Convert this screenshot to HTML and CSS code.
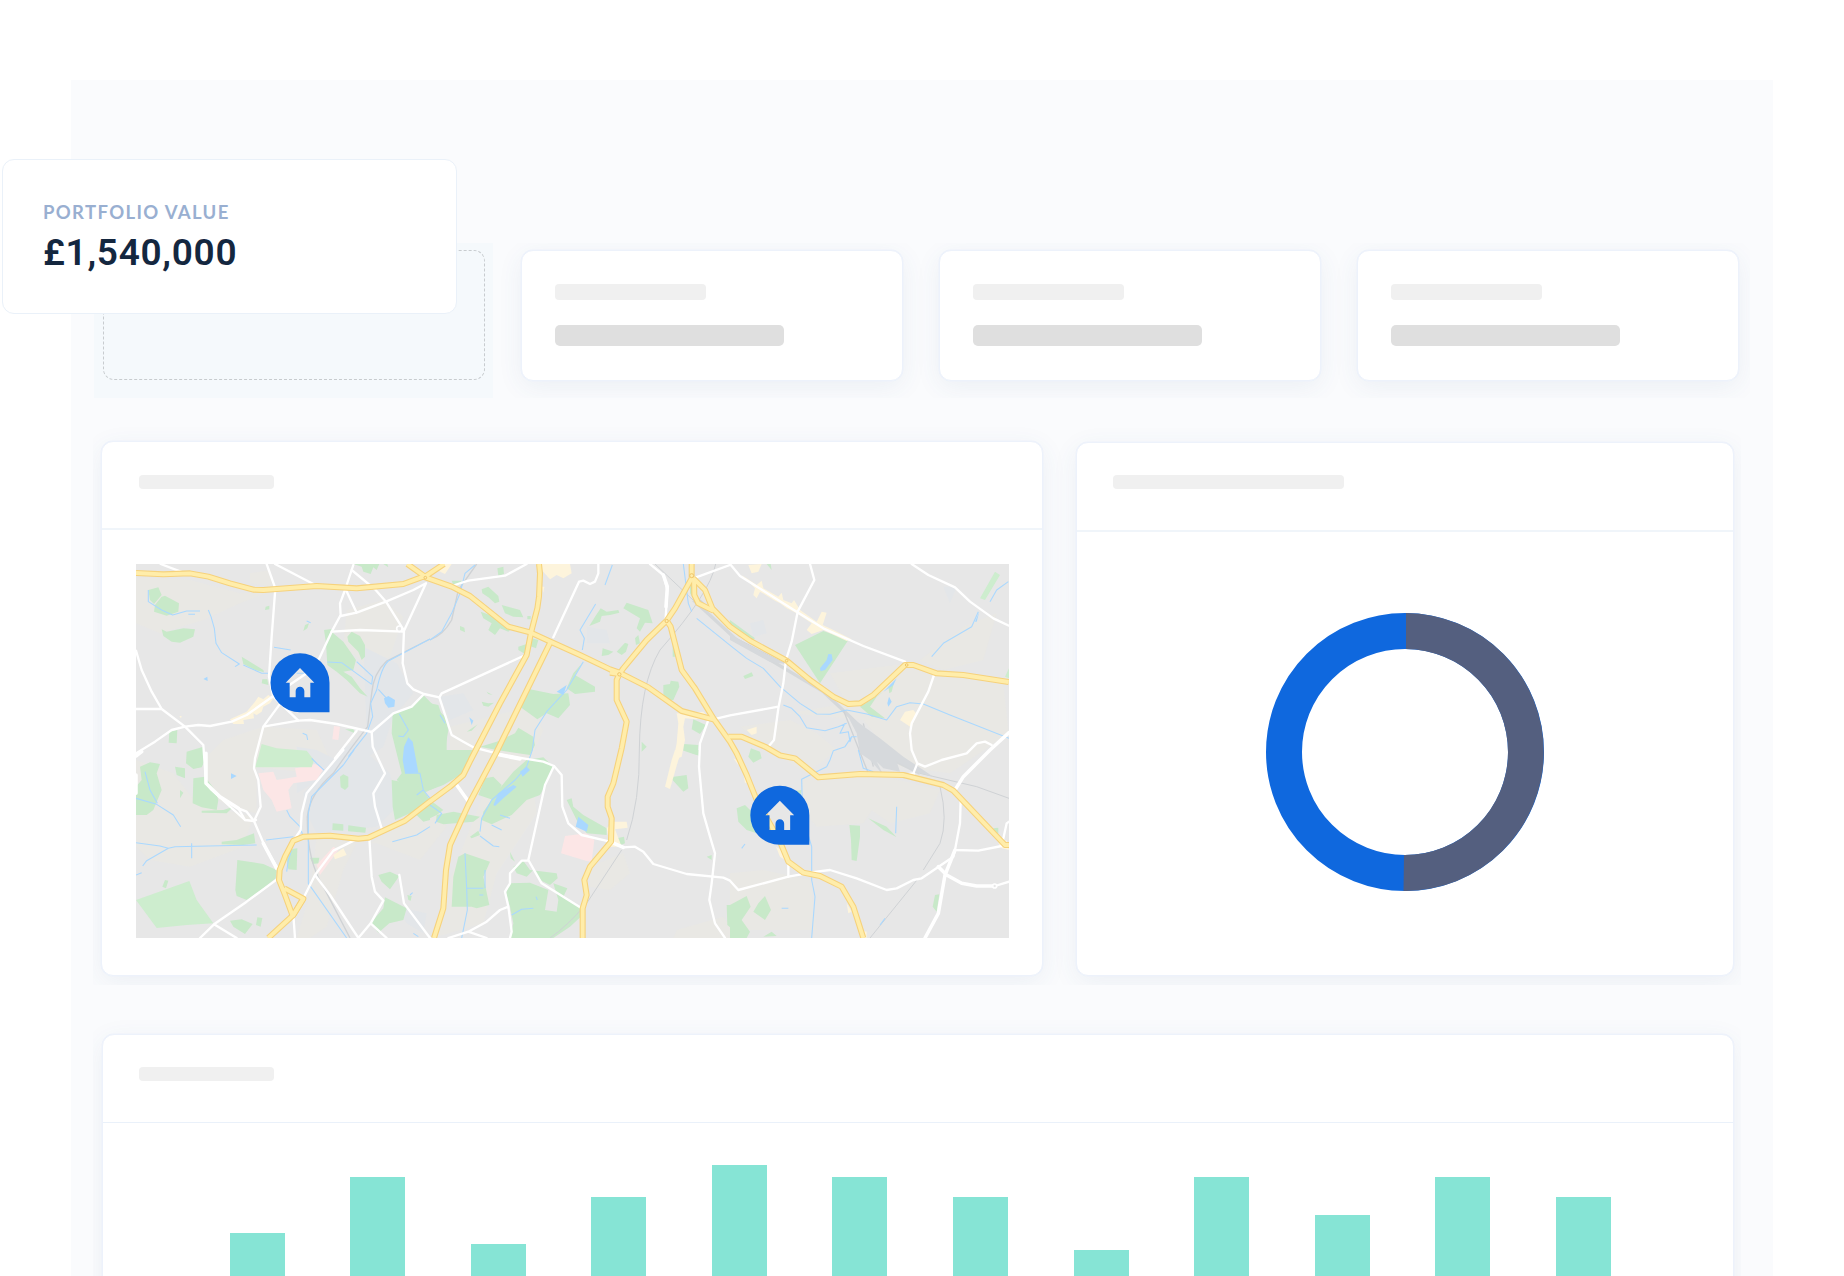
FILE: index.html
```html
<!DOCTYPE html>
<html lang="en">
<head>
<meta charset="utf-8">
<title>Portfolio dashboard</title>
<link rel="stylesheet" href="styles.css">
</head>
<body>
<main class="panel">
  <section class="stats">
    <div class="drop-zone"><div class="drop-target"></div></div>
    <div class="card stat"><span class="bone bone-label"></span><span class="bone bone-value"></span></div>
    <div class="card stat"><span class="bone bone-label"></span><span class="bone bone-value"></span></div>
    <div class="card stat"><span class="bone bone-label"></span><span class="bone bone-value"></span></div>
  </section>

  <section class="overview">
    <article class="card map-card">
      <header class="card-head"><span class="bone bone-title"></span></header>
      <svg class="map" viewBox="18 12 2619 1122" preserveAspectRatio="none">
        <defs>
          <g id="main-roads">
            <path d="M18 39L100 43L180 40L235 50L300 70L370 89L400 90L440 87L560 78L680 85L820 72L880 50L965 80L1020 108L1135 200L1203 218L1262 245L1350 285L1440 328L1468 338L1555 382L1655 453L1750 478"/>
            <path d="M832 12L885 50L942 12" />
            <path d="M1227 12L1230 40L1227 110L1222 145L1203 218L1190 285L1110 430L1022 600L1000 645L960 680L900 724L825 782L715 833L685 836L600 827L520 830L490 842L465 890L449 930L447 960L465 1005L487 1065L490 1065L520 1016L463 985"/>
            <path d="M520 1016L490 1065L415 1134"/>
            <path d="M1262 245L1100 575L1015 735L960 855L948 930L940 1045L912 1134"/>
            <path d="M1685 12V55L1635 145L1610 182L1550 240L1480 325L1468 342L1440 338"/>
            <path d="M1690 55L1725 90L1747 145L1800 200L1860 242L1970 302L2040 360L2110 410L2155 432L2190 430L2230 405L2325 315L2350 315L2420 340L2500 345L2636 366"/>
            <path d="M1692 60L1693 105L1705 130L1750 152"/>
            <path d="M1610 182L1622 200L1655 330L1695 385L1750 475L1800 545L1820 580L1850 645L1880 720L1950 845L1975 905L2020 938L2070 948L2135 980L2170 1040L2200 1134"/>
            <path d="M1795 530L1835 530L1905 560L1950 586L1995 595L2065 652L2190 642L2320 645L2440 675L2470 692L2625 855L2637 855"/>
            <path d="M1468 342L1460 360V420L1490 485L1475 565L1450 670L1433 710V740L1445 775L1443 845L1380 920L1363 960L1370 1005L1358 1045V1134"/>
          </g>
        </defs>
        <rect class="land" x="18" y="12" width="2619" height="1122"/>

        <g class="soil">
          <path d="M18 50L180 60L330 100L420 95L330 130L220 180L90 220L18 190z"/>
          <path d="M360 40L420 30L430 80L360 70zM650 150L760 120L820 170L780 290L720 320L640 260z"/>
          <path d="M230 590L280 540L400 500L560 510L600 600L540 640L380 620L380 760L300 740L230 700z"/>
          <path d="M18 600L130 640L200 730L370 770L340 860L180 920L60 900L18 860z"/>
          <path d="M560 830L680 850L640 930L590 1100L540 1134H500L540 1000zM720 850L900 730L950 800L870 900L740 850z"/>
          <path d="M960 500L1200 440L1240 510L1200 600L1220 760L1100 940L1060 1090L920 1130L960 960L1100 600L960 600z"/>
          <path d="M1380 920L1480 880L1500 940L1440 990L1380 980zM1640 1110L1780 1070L1830 1134H1630z"/>
          <path d="M1800 940L1900 930L2040 960L2060 1110L1800 1110z"/>
          <path d="M2020 650L2200 640L2260 700L2200 790L2060 800L2010 740z"/>
          <path d="M2220 640L2430 690L2400 760L2280 790L2210 740z"/>
          <path d="M2100 340L2340 310L2480 350L2620 370L2636 520L2460 640L2310 620L2200 480L1980 460L2150 430z"/>
          <path d="M2370 300L2500 200L2600 160L2560 300L2440 330z"/>
          <path d="M1830 500L1980 480L2060 520L2120 570L2030 640L1900 560z"/>
        </g>
        <g class="haze">
          <path d="M700 260L800 310L850 400L790 470L760 560L700 600L620 580L710 520z"/>
          <path d="M620 590L700 570L780 640L800 740L740 800L560 820L530 760L520 700L580 640z"/>
          <path d="M930 410L1000 400L1030 450L960 480zM1370 200L1430 210L1440 250L1370 250zM1860 190L1900 180L1910 220L1870 230zM500 560L560 570L620 600L600 640L500 700zM2440 80L2480 80L2460 130zM800 1040L890 1060L880 1120L830 1090z"/>
        </g>
        <g class="pink">
          <path d="M385 640L430 635L440 660L500 650L495 625L555 612L582 625L560 660L490 670L475 690L485 745L440 755L425 720L400 690zM612 498L630 500L625 540L607 538z"/>
          <path d="M1305 828L1370 820L1393 840L1385 905L1370 903L1293 880zM560 915L610 860L625 870L570 945z"/>
        </g>

        <g class="park">
          <path d="M55 90L85 82L95 105L72 132L60 120zM95 110L105 107L147 130L145 155L110 167L72 155L75 135zM95 208L110 215L160 205L195 208L190 230L150 248L125 245L100 228z"/>
          <path d="M407 140L418 137V148L405 150zM525 195L537 190L532 205L520 213zM335 290L360 305L400 330L402 337L375 330L340 312zM397 358L412 358L415 375L395 370z"/>
          <path d="M670 12H748L740 30L730 22L722 42L700 35L695 20zM760 12L775 22L772 12z"/>
          <path d="M582 210L605 207L608 218L640 245L678 300L670 330L640 335L665 350L690 385L713 410L690 400L650 360L620 335L592 315L588 250z"/>
          <path d="M665 215L690 228L705 255V290L695 300L685 275L655 245L652 230zM118 515L142 510L140 550L116 548zM170 575L220 560L225 600L215 622L190 627L168 610z"/>
          <path d="M645 508L670 508L675 520z"/>
          <path class="bright" d="M395 552L440 565L530 572L552 600L545 622H375L385 590z"/>
          <path d="M788 460L840 440L880 405L900 425L945 470L955 510L945 570L960 600L985 635L950 665L890 695L850 700L800 660L815 640L785 520z"/>
          <path d="M785 660L812 665L830 655L880 690L900 720V780L880 785L850 755L795 780L788 740z"/>
          <path d="M30 620L60 607L90 612L80 640L95 690L70 750L50 765L18 765V680L35 660z"/>
          <path d="M190 655L225 650L255 690L265 720L260 750L215 742L188 730zM135 620L165 625L165 655L140 645zM215 752L280 750L310 740L290 760L215 758zM150 690L160 698L150 715z"/>
          <path d="M275 845L320 840L372 820L376 850L340 855L275 853zM322 900L400 912L440 930L437 955L400 985L350 1020L320 1008L316 990z"/>
          <path class="bright" d="M18 1020L178 963L200 1020L250 1090L170 1095L80 1104L18 1020z"/>
          <path d="M300 1082L335 1078L368 1092L345 1122L310 1100zM382 1072L397 1074L392 1100L378 1095zM105 960L115 962L108 985L97 980z"/>
          <path d="M480 868L502 865L500 930L475 928L470 900zM630 650L640 643L655 650V680L645 690L632 682zM608 790L640 793L640 812L607 810zM655 796L708 803L706 818L654 814zM540 893L568 893L565 910L548 912z"/>
          <path d="M745 945L780 935L808 948L780 988L755 965zM765 1012L830 1045L820 1080L778 1090L745 1118L722 1090L760 1045zM832 1005L845 1008L842 1022L835 1020z"/>
          <path d="M1055 88L1075 80L1105 108L1108 125L1095 130L1075 112L1057 100zM1102 25L1120 20L1122 42L1105 47zM965 62L995 62L990 75L970 75zM1115 135L1170 150L1180 172L1150 170L1125 160z"/>
          <path d="M1052 155L1080 165L1145 205L1135 215L1110 205L1095 225L1075 210L1085 190L1060 175zM1192 168L1202 168V178H1192zM990 198L1003 203L1005 217L990 210z"/>
          <path d="M1205 235L1225 240L1218 265L1200 258zM1165 260L1190 252L1185 282L1165 270zM1395 170L1412 145L1430 155L1465 150L1468 158L1440 165L1415 168L1410 185L1378 198zM1490 128L1555 150L1568 190L1545 188L1530 215L1520 205L1530 175L1480 145z"/>
          <path d="M1418 265L1450 275L1435 285L1415 288zM1460 275L1485 248L1495 252L1488 275L1475 285zM1515 235L1525 225L1530 250L1518 255zM1628 230L1640 290L1628 290z"/>
          <path d="M1360 305L1335 345L1395 380V395L1335 402L1310 385L1330 340zM1200 388L1270 402L1315 400L1320 435L1285 475L1250 460L1222 478L1170 440z"/>
          <path d="M1155 520L1165 503L1190 518L1210 530L1215 555L1200 585L1100 570L1050 560L1100 545z"/>
          <path d="M1600 375L1620 372L1622 362L1645 365L1648 380L1630 420L1605 425L1600 400zM1690 478L1728 495L1710 522L1685 508zM1535 545L1550 560L1535 575zM1660 552L1705 555L1703 585L1660 570z"/>
          <path d="M1055 425L1075 430L1092 428L1075 440L1060 437zM1070 395L1088 405L1075 402zM1010 515L1043 493L1025 512z"/>
          <path d="M900 430L925 435L950 510L950 580L925 625L900 640z"/>
          <path d="M900 570H1040L1000 640L940 675L900 690z"/>
          <path d="M1190 600L1240 592L1270 620L1250 670L1230 705L1190 720L1145 765L1085 793L1055 780L1060 755L1105 690L1150 635zM1065 655L1090 650L1115 675L1090 720L1045 705zM920 765L970 755L1050 770L1030 785L940 793L918 785z"/>
          <path d="M900 720L940 750L920 765L900 775zM1020 830L1045 812L1050 825L1025 835zM1005 880L1080 905L1060 950L1078 1035L1040 1045L1025 1040L965 1040L970 950L985 890z"/>
          <path d="M1140 875L1155 905L1142 895zM1150 920L1180 903L1200 930L1280 940L1283 955L1260 975L1230 960L1210 930L1190 950L1160 940z"/>
          <path d="M1138 970L1200 968L1255 990L1245 1050L1280 1055L1285 1020L1270 970L1312 985L1300 1010L1355 1045L1358 1065L1320 1100L1270 1134H1140L1150 1090L1140 1040L1128 1000z"/>
          <path d="M1310 720L1325 715L1330 740L1360 765L1430 805L1430 825L1370 820L1340 780zM1460 835L1482 830L1485 850L1465 858zM1620 652L1670 645L1675 685L1660 695zM1655 570H1710V588L1690 582zM1730 890L1745 885V900z"/>
          <path d="M1995 255L2080 213L2155 240L2070 370zM1800 180L1875 235L1860 245L1800 205zM1895 255L1930 270L1915 272zM1840 348L1865 337L1870 348L1845 357zM2190 440L2260 395L2240 410L2220 440L2265 475L2225 470zM2275 380L2292 368L2285 395L2278 400z"/>
          <path class="bright" d="M2550 115L2595 35L2610 45L2565 120zM2625 350L2637 325V355z"/>
          <path d="M1863 565L1890 575L1895 595L1870 608L1855 590zM1820 745L1845 735L1870 760L1880 820L1850 810L1825 785zM2158 795L2190 797V830L2180 903L2165 900L2163 840zM2215 775L2270 800L2300 832L2260 810zM1998 692L2015 690L2012 705z"/>
          <path d="M1800 1035L1850 1008L1862 1040L1835 1080L1860 1115L1850 1134H1800zM1885 1030L1905 1008L1923 1050L1905 1080L1870 1055zM1900 1130L1925 1115L1940 1128zM1790 1035L1810 1035V1110L1792 1095zM2415 1005L2428 1003L2420 1055L2408 1040zM2590 805L2605 803V820L2590 815zM1680 55L1690 60L1700 130L1680 100z"/>
          <path d="M1910 12L1922 12L1925 30z"/>
        </g>

        <g class="sand">
          <path d="M300 478L350 455L375 425L385 410L400 418L415 405L430 415L420 430L400 440L395 455L380 465L370 460L372 475L340 480L342 492L310 492zM148 468L155 468L153 475z"/>
          <path d="M925 12H965L945 42L920 30zM1230 12H1320L1325 40L1300 55L1280 45L1260 58L1235 30zM1235 80L1243 80L1240 98z"/>
          <path d="M1640 460L1660 460L1720 455L1735 470L1700 478L1665 475L1660 500L1665 540L1655 590L1630 600L1640 550L1645 490zM1850 510L1880 500V520L1865 525zM1635 570H1660L1645 600L1620 687L1605 680L1625 600z"/>
          <path d="M1430 805L1450 785L1490 785L1493 803L1455 808L1475 860L1440 860z"/>
          <path d="M1855 15L1895 12L1885 35L1865 40zM1835 45L1880 75L1895 62L1900 85L1945 110L1955 98L1960 120L1985 130L1992 120L2010 150L2060 185L2075 155L2090 158L2078 195L2110 210L2165 238L2150 243L2080 210L2045 222L2030 210L2045 190L2000 160L1970 145L1950 130L1935 122L1890 95L1880 115L1870 105L1875 85z"/>
          <path d="M2310 480L2325 455L2350 450L2358 460L2345 503z"/>
          <path d="M610 885L640 865L650 885L615 898zM1938 860L1955 870L1965 900L1950 890zM1842 650L1855 665L1845 670zM1810 595L1830 605L1825 615zM2150 1030L2165 1055L2155 1060zM2190 1110L2210 1115L2210 1134L2190 1130zM2605 850L2630 840L2637 870L2615 865z"/>
        </g>

        <g class="rail">
          <path d="M900 237L770 303Q730 340 725 400L713 500Q650 580 610 640Q540 700 532 770Q530 900 580 980L660 1134"/>
          <path d="M1040 12L985 90L965 180Q940 225 900 240"/>
          <path class="thin" d="M1575 12L1800 225L2040 350L2120 420M1757 12Q1740 100 1590 270Q1530 370 1528 570Q1530 720 1490 840M1475 870L1370 1030Q1310 1100 1260 1134"/>
          <path class="wide" d="M1690 120L1820 240L2080 395L2160 470L2200 510L2270 590L2370 640"/>
          <path d="M1710 120L1830 230M2140 450L2215 640M2200 490L2230 620"/>
          <path class="thin" d="M2370 640L2540 680L2637 715M2430 680Q2455 780 2430 850L2380 930M2365 955L2220 1134"/>
        </g>
        <path class="yard" d="M1800 222L1860 258L1970 312L1920 306L1800 240zM2150 462L2250 535L2320 590L2410 650L2370 640L2300 605L2310 635L2260 625L2240 605L2260 645L2220 600L2190 580L2180 520z"/>

        <g class="water-line">
          <path d="M55 90V125L95 150L128 165L170 153H210M175 163H195M235 150L243 170L253 205L258 250L275 278L328 312L315 320M340 315L395 340H420M432 262L482 270M530 183L542 188M500 340H540"/>
          <path d="M900 237L775 303Q755 320 740 390L722 430L728 470L710 520L655 590M592 306L635 308L725 373M680 305L728 350L725 373M745 388L770 415M808 462L835 510L820 530L805 528M518 520L530 525L533 540"/>
          <path d="M672 570L640 615L545 710L535 760V970L650 1134M545 595L560 610L582 630M470 750L480 770L510 800L518 825M18 715L80 733L130 765L152 800M45 635L60 690L82 730"/>
          <path d="M18 848L90 858L115 865L50 902L38 918M115 865L135 860L270 857L380 855M185 850V895M408 840L490 830M470 935L475 900L485 870M787 845L860 825L900 800M18 945L35 938M825 640L870 640L880 690L860 705M880 690L900 715"/>
          <path d="M1035 15L1005 40L990 100L965 160L935 215L900 240M930 465L945 490M1397 132L1350 210L1363 235L1357 270M1447 15L1425 75M1360 305L1310 390L1250 455L1215 510L1207 570L1190 620L1155 660L1085 720L1055 775L1050 815M1110 765L1140 775M1085 795L1115 810M1050 828L1090 858L1108 860M1005 880L1010 985L1012 1050L995 1134M1010 985H1060M1048 1005H1060M1065 930V985M1145 1065L1175 1048L1210 1045M1218 1010L1222 1020M900 735L935 760L915 790"/>
          <path d="M1660 12L1675 130L1685 155M1700 175L1805 260L1850 295L1900 325L1950 380L2010 430L2060 462L2100 463L2150 450L2210 462L2270 480L2300 440L2340 428L2380 432L2460 465L2637 535"/>
          <path d="M1960 435L1985 445L2010 470L2030 503L2085 512L2125 500L2150 490M2145 490L2130 520L2155 515L2160 545L2165 530L2180 530M2165 530L2145 560L2110 572L2100 600L2090 620L2040 645L2015 658L2018 770L2045 860L2045 960L2055 1010L2045 1134M2185 570L2200 625L2230 635"/>
          <path d="M2635 65L2600 90L2580 125M2545 155L2525 200L2440 250L2405 290M2300 740L2297 820M1835 865L1845 852M1955 1045H1975M2250 1095L2265 1075M850 1120L865 1130M840 1005L848 998"/>
        </g>
        <g class="water">
          <path d="M822 560L835 532L848 545L860 610L865 638L825 640L818 600zM762 415L775 408L795 420L793 440L775 443L765 430zM220 357L232 350L233 363zM303 640L320 648L303 657z"/>
          <path d="M1170 635L1190 620L1200 630L1178 650zM1090 735L1105 700L1150 675L1160 680L1120 715L1095 738zM1345 770L1375 795L1370 815L1337 800zM1280 395L1310 375L1300 405zM1018 472L1030 482L1025 495z"/>
          <path d="M2070 325L2090 300L2095 282L2105 283L2108 300L2085 330L2072 334zM2272 430L2277 410L2285 425L2275 440zM2260 395L2300 355L2290 375L2265 392zM2535 185L2548 155L2540 185z"/>
        </g>

        <g class="roads">
          <path d="M92 12L160 38M410 12L436 85L425 230L417 350L430 410L505 482L540 480L620 492L725 516L790 460L845 440L882 402M435 12L550 72M670 15L645 90L630 130L632 165L605 215L568 295L530 340L430 408L350 465L305 485L240 498L205 495L165 500L125 510L75 545L18 580"/>
          <path d="M665 30L735 88L768 125L822 212M648 90L680 158M632 168L680 158L768 125L850 90L888 70L822 212L818 310L832 370L850 388L882 402L928 412M605 215L690 210L822 215M18 272L35 330L65 395L95 447L165 500L220 555L228 670L245 690L345 780L372 783L378 780M18 447H95M455 425L400 500L375 595L372 625L385 660L392 740L372 783M400 500L505 482"/>
          <path d="M680 512L615 595M725 516L728 560L765 640L730 700L735 740L755 805M640 570L530 700L515 760L512 810L495 835M325 745L350 755L372 783M325 745L345 780M372 783L405 860L440 920M445 955L350 1025L252 1093L210 1134M252 1093L320 1134M718 833L725 950L735 995L760 1022L722 1090L685 1134M722 1090L770 1134M685 835L610 872L555 945L525 1005L522 1015M555 945L600 1005L685 1134M490 1065L495 1134M808 945L822 1030L900 1134"/>
          <path d="M965 78L1015 62L1125 47L1190 12M1405 12V40L1395 65L1380 72L1360 62L1347 65L1270 232M1180 288L935 400L928 412L965 525L1000 545L1030 562L1100 580L1180 595L1240 605L1272 618L1295 645L1297 740L1315 790L1355 825L1440 845L1480 862L1515 860L1540 875L1570 912L1670 942L1780 953L1800 962L1825 990L1975 950L2060 935L2100 930L2180 955L2270 990L2300 985L2350 960L2375 955L2470 890L2475 870"/>
          <path d="M1272 618L1245 675L1195 900L1235 970L1355 1045M1195 902L1175 902L1140 940V970L1125 995L1135 1040L1145 1115L1140 1134M1135 1040L1110 1050L1070 1085L1015 1115L955 1134M1015 1115L1070 1134M1735 480L1710 550L1707 620L1720 760L1740 830L1755 880L1745 970L1738 1020L1755 1090L1785 1134"/>
          <path d="M1750 478L1800 466L1945 440M2040 12L2053 60L2003 155L1985 245L1968 300L1960 370L1945 445L1932 540L1915 560M1560 12L1600 45L1612 90L1607 175M1690 55L1800 15M1800 12L1830 48L2000 155L2080 205L2200 258L2325 305M2345 12L2395 45L2475 82L2520 125L2590 175L2637 197"/>
          <path d="M2412 345L2395 395L2345 490L2340 520L2345 570L2362 610L2350 640L2320 645M2362 610L2385 620L2435 600L2510 580L2540 550L2565 545L2585 555M2492 720L2490 790L2475 870L2545 872L2615 858L2630 790L2637 785M1975 905V950M2595 978L2637 965M2352 640V655"/>
        </g>
        <g class="roads heavy">
          <path d="M228 580V670L270 710L325 745M400 850L440 925M18 588L35 575M18 645V700M1600 45L1612 80L1608 140M2637 518L2580 570L2500 650L2475 690M2475 870L2445 945L2425 1060L2385 1134M2425 920L2450 945L2495 970L2540 978H2590M978 672L1018 728M1440 845L1480 862M1100 583L1170 597"/>
        </g>
        <use class="casing" href="#main-roads"/>
        <use class="fill" href="#main-roads"/>
        <g class="rounds">
          <circle cx="1468" cy="343" r="5"/><circle cx="1610" cy="183" r="5"/><circle cx="2330" cy="315" r="4"/><circle cx="1685" cy="47" r="6"/><circle cx="1970" cy="302" r="4"/><circle cx="886" cy="53" r="4"/>
        </g>
        <g class="ring"><circle cx="2594" cy="978" r="6"/><circle cx="808" cy="206" r="8"/></g>
        <g class="pin" fill-rule="evenodd">
          <path d="M510 279.500A88.500 88.500 0 1 0 510 456.500H598.500V368A88.500 88.500 0 0 0 510 279.500zM510 324L553 368H541V412H523V393A13 13 0 0 0 497 393V412H479V368H467z"/>
          <path d="M1949.500 677.500A88.500 88.500 0 1 0 1949.500 854.500H2038V766A88.500 88.500 0 0 0 1949.500 677.500zM1949.500 722L1992.500 766H1980.500V810H1962.500V791A13 13 0 0 0 1936.500 791V810H1918.500V766H1906.500z"/>
        </g>
      </svg>
    </article>

    <article class="card split-card">
      <header class="card-head"><span class="bone bone-title bone-long"></span></header>
      <svg class="donut" viewBox="0 0 278 278">
        <circle cx="139" cy="139" r="121" fill="none" stroke="#0f68de" stroke-width="36"/>
        <path fill="#545f7f" d="M140 0A139 139 0 0 1 137.500 278L138 242A103 103 0 0 0 140 36z"/>
      </svg>
    </article>
  </section>

  <section class="history">
    <article class="card history-card">
      <header class="card-head"><span class="bone bone-title"></span></header>
      <div class="bars">
        <i style="height:43px"></i><i style="height:99.400px"></i><i style="height:32.500px"></i><i style="height:79.400px"></i>
        <i style="height:111px"></i><i style="height:99.400px"></i><i style="height:79.400px"></i><i style="height:26px"></i>
        <i style="height:99.400px"></i><i style="height:61.400px"></i><i style="height:99.400px"></i><i style="height:79.400px"></i>
      </div>
    </article>
  </section>
</main>

<aside class="value-card">
  <div class="value-label">PORTFOLIO VALUE</div>
  <div class="value-amount">£1,540,000</div>
</aside>
</body>
</html>
```
FILE: styles.css
```css
* { box-sizing: border-box; }

body {
  margin: 0;
  height: 1276px;
  overflow: hidden;
  background: #fff;
  font-family: Lato, "Liberation Sans", sans-serif;
}

.panel {
  width: 1702px;
  height: 1196px;
  margin: 80px 0 0 71px;
  padding: 163px 0 0 22px;
  overflow: hidden;
  background: #fafbfd;
}

.card {
  background: #fff;
  border: 1px solid #edf2fb;
  border-radius: 12px;
  box-shadow: 0 0 0 .5px #edf2fb, 0 6px 26px rgba(50, 100, 140, .075);
}

.bone {
  display: block;
  border-radius: 4px;
  background: #f0f0f0;
}

/* Stat row */
.stats {
  display: grid;
  grid-template-columns: repeat(4, 382px);
  column-gap: 36px;
  width: 1657px;
  height: 155px;
  padding: 7px 10px 17px;
  overflow: hidden;
}

.drop-zone {
  margin: -7px -8px -17px -9px;
  padding: 7px 8px 17px 9px;
  background: #f5f9fc;
}

.drop-target {
  height: 130px;
  border: 1px dashed #c8cccf;
  border-radius: 11px;
}

.stat { padding: 33px; }
.bone-label { width: 151px; height: 16px; }
.bone-value { width: 229px; height: 21px; margin-top: 25px; border-radius: 5px; background: #dfdfdf; }

/* Map and split */
.overview {
  display: flex;
  gap: 33px;
  width: 1648px;
  height: 558px;
  margin-top: 29px;
  padding: 14px 7px 9px 8px;
  overflow: hidden;
}

.card-head {
  height: 88px;
  padding: 33px 37px 0;
  border-bottom: 1px solid #eaf1fa;
}

.bone-title { width: 135px; height: 14px; }
.bone-long { width: 231px; }

.map-card { width: 942px; }
.map-card .card-head { height: 88px; border-bottom: 2px solid #f0f5fa; }

.map {
  display: block;
  width: 873px;
  height: 374px;
  margin: 34px 0 0 34px;
}

.land { fill: #e7e7e7; }
.soil { fill: #e9e8e4; }
.haze { fill: #e3e6e9; }
.pink { fill: #fce6e6; }
.park { fill: #c8e9c9; }
.bright { fill: #cdedce; }
.sand { fill: #fdf4dc; }
.water { fill: #a9d8ff; }
.water-line { fill: none; stroke: #a9d8ff; stroke-width: 3.200; stroke-linejoin: round; }
.rail { fill: none; stroke: #cfd2d5; stroke-width: 4; }
.thin { stroke-width: 3; }
.wide { stroke: #d5d8da; stroke-width: 10; }
.yard { fill: #d6d9dc; }
.roads { fill: none; stroke: #fff; stroke-width: 7; stroke-linejoin: round; stroke-linecap: round; }
.heavy { stroke-width: 10.500; }
.casing, .fill { fill: none; stroke-linejoin: round; }
.casing { stroke: #f6d27c; stroke-width: 18; }
.fill { stroke: #ffedaa; stroke-width: 11.500; }
.rounds { fill: #ffedaa; stroke: #f0c568; stroke-width: 3; }
.ring { fill: #e7e7e7; stroke: #fff; stroke-width: 5; }
.pin { fill: #0f68de; }

.split-card { width: 658px; margin-top: 1px; }
.split-card .card-head { height: 89px; padding: 32px 36px 0; border-bottom: 2px solid #f0f5fa; }

.donut {
  display: block;
  width: 278px;
  height: 278px;
  margin: 81px 0 0 188.500px;
}

/* Bar chart */
.history {
  width: 1648px;
  height: 257px;
  margin-top: 34px;
  padding: 15px 7px 0 9px;
  overflow: hidden;
}

.history-card { width: 1632px; height: 290px; }
.history-card .card-head { padding: 32px 36px 0; }

.bars {
  display: flex;
  align-items: flex-end;
  gap: 65.600px;
  height: 153px;
  padding-left: 126.500px;
}

.bars i {
  flex: none;
  width: 55px;
  background: #86e4d5;
}

/* Floating value card lies over the panel's edge */
.value-card {
  position: absolute;
  left: 2px;
  top: 159px;
  width: 455px;
  height: 155px;
  padding: 41px 40px 0;
  border: 1px solid #eaf1f9;
  border-radius: 12px;
  background: #fff;
}

.value-label {
  font-size: 18.500px;
  line-height: 22px;
  font-weight: 700;
  letter-spacing: 1.350px;
  color: #99afd1;
  white-space: nowrap;
}

.value-amount {
  margin-top: 8px;
  font: 600 37px/44px Roboto, sans-serif;
  letter-spacing: .7px;
  color: #14273f;
}
```
